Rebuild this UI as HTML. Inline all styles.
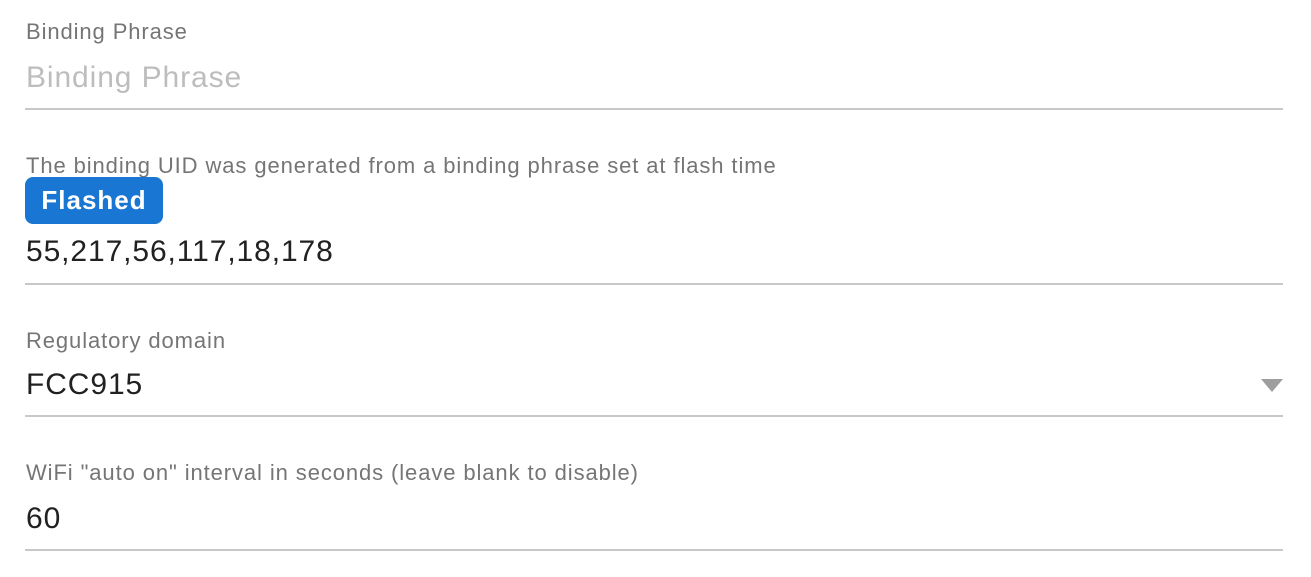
<!DOCTYPE html>
<html><head><style>
body{margin:0;width:1311px;height:577px;background:#fff;font-family:"Liberation Sans",Arial,sans-serif;position:relative;overflow:hidden}
.a{position:absolute;white-space:nowrap}
.l{font-size:22px;color:#757575;left:26px;letter-spacing:0.9px}
.v{font-size:30px;color:#212121;left:26px;letter-spacing:0.9px}
.line{position:absolute;left:25px;width:1258px;height:2px;background:#c8c8c8}
.badge{position:absolute;left:25px;top:177px;width:138px;height:47px;background:#1976d2;border-radius:8px;color:#fff;font-weight:bold;font-size:26px;text-align:center;line-height:47px;letter-spacing:1px}
</style></head><body>
<div class="a l" style="top:19px">Binding Phrase</div>
<div class="a v" style="top:61px;color:#bdbdbd">Binding Phrase</div>
<div class="line" style="top:108px"></div>
<div class="a l" style="top:153px">The binding UID was generated from a binding phrase set at flash time</div>
<div class="badge">Flashed</div>
<div class="a v" style="top:235px">55,217,56,117,18,178</div>
<div class="line" style="top:283px"></div>
<div class="a l" style="top:328px">Regulatory domain</div>
<div class="a v" style="top:368px">FCC915</div>
<svg class="a" style="left:1261px;top:379px" width="22" height="13"><polygon points="0,0 22,0 11,13" fill="#9e9e9e"/></svg>
<div class="line" style="top:415px"></div>
<div class="a l" style="top:460px">WiFi "auto on" interval in seconds (leave blank to disable)</div>
<div class="a v" style="top:502px">60</div>
<div class="line" style="top:549px"></div>
</body></html>
